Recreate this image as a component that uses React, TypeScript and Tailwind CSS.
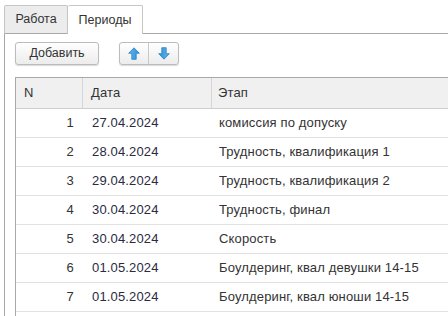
import React from "react";

const rows = [
  ["1", "27.04.2024", "комиссия по допуску"],
  ["2", "28.04.2024", "Трудность, квалификация 1"],
  ["3", "29.04.2024", "Трудность, квалификация 2"],
  ["4", "30.04.2024", "Трудность, финал"],
  ["5", "30.04.2024", "Скорость"],
  ["6", "01.05.2024", "Боулдеринг, квал девушки 14-15"],
  ["7", "01.05.2024", "Боулдеринг, квал юноши 14-15"],
  ["", "", ""],
];

function Arrow({ down }: { down?: boolean }) {
  return (
    <svg width="12" height="13" viewBox="0 0 12 13" style={{ transform: down ? "rotate(180deg)" : undefined }}>
      <defs>
        <linearGradient id={down ? "gd" : "gu"} x1="0" y1="0" x2="1" y2="0">
          <stop offset="0" stopColor="#5fb8ef" />
          <stop offset="1" stopColor="#2f8fd6" />
        </linearGradient>
      </defs>
      <path
        d="M6 0.8 L11.3 6.3 L8.2 6.3 L8.2 12.3 L3.8 12.3 L3.8 6.3 L0.7 6.3 Z"
        fill={`url(#${down ? "gd" : "gu"})`}
        stroke="#2a7fc4"
        strokeWidth="0.8"
        strokeLinejoin="round"
      />
    </svg>
  );
}

export default function App() {
  return (
    <div
      className="w-[448px] h-[316px] overflow-hidden bg-white text-[13px] text-[#333]"
      style={{ fontFamily: '"Liberation Sans", Arial, sans-serif' }}
    >
      {/* Tabs */}
      <div className="flex items-end pt-[5px] pl-[4px] h-[34px] text-[12.5px]">
        <div className="h-[29px] w-[64px] flex items-center justify-center bg-[#ececec] border border-[#c6c6c6] border-b-[#a8a8a8] rounded-t-[2px]">
          Работа
        </div>
        <div className="h-[29px] w-[75px] flex items-center justify-center bg-white border border-[#c6c6c6] border-l-0 border-b-0 rounded-t-[2px]">
          Периоды
        </div>
        <div className="flex-1 h-[29px] border-b border-[#a8a8a8]" />
      </div>
      {/* Panel */}
      <div className="ml-[4px] border-l border-[#a8a8a8] h-[282px] pl-[10px] pt-[8px]">
        <div className="flex items-center gap-[20px] h-[23px] text-[12.5px]">
          <div className="w-[84px] h-[23px] flex items-center justify-center rounded-[3px] border border-[#bcbcbc] bg-gradient-to-b from-white to-[#ececec] shadow-[0_1px_1px_rgba(0,0,0,0.15)]">
            Добавить
          </div>
          <div className="flex h-[23px] rounded-[3px] border border-[#bcbcbc] bg-gradient-to-b from-white to-[#ececec] shadow-[0_1px_1px_rgba(0,0,0,0.15)]">
            <div className="w-[29px] flex items-center justify-center border-r border-[#c8c8c8]">
              <Arrow />
            </div>
            <div className="w-[29px] flex items-center justify-center">
              <Arrow down />
            </div>
          </div>
        </div>
        {/* Table */}
        <div className="mt-[12px] border-l border-t border-[#a8a8a8] tracking-[0.15px]">
          <div className="flex h-[31px] bg-[#f0f0f0] border-b border-[#cfcfcf]">
            <div className="w-[67px] pl-[8px] flex items-center border-r border-[#d6d6d6]">N</div>
            <div className="w-[129px] pl-[8px] flex items-center border-r border-[#d6d6d6]">Дата</div>
            <div className="flex-1 pl-[6px] flex items-center">Этап</div>
          </div>
          {rows.map((r, i) => (
            <div key={i} className="flex h-[29px] border-b border-[#e2e2e2]">
              <div className="w-[67px] pr-[9px] flex items-center justify-end">{r[0]}</div>
              <div className="w-[129px] pl-[9px] flex items-center text-[#2a2a40]">{r[1]}</div>
              <div className="flex-1 pl-[7px] flex items-center">{r[2]}</div>
            </div>
          ))}
        </div>
      </div>
    </div>
  );
}
